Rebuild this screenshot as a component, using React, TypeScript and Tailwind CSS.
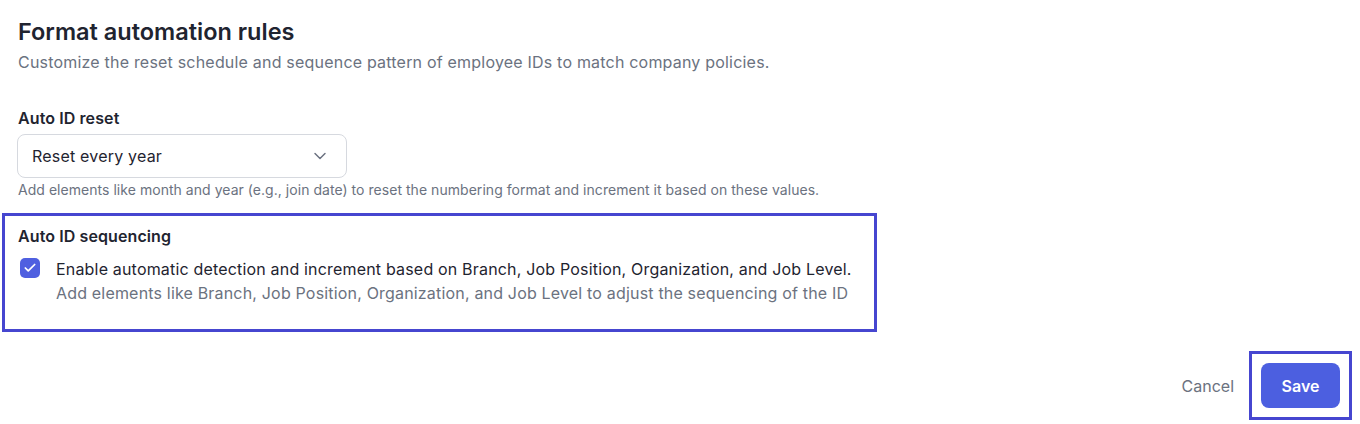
import React from "react";

export default function App() {
  return (
    <div className="w-[1360px] h-[424px] bg-white overflow-hidden font-['Inter',sans-serif] antialiased">
      <div className="pl-[18px] pt-4">
        <h1 className="text-[23.5px] leading-8 font-semibold text-[#1f2430]">Format automation rules</h1>
        <p className="mt-0.5 text-base leading-6 tracking-[0.2px] text-[#6b7280]">
          Customize the reset schedule and sequence pattern of employee IDs to match company policies.
        </p>

        <div className="mt-8 text-base leading-6 font-semibold tracking-[0.1px] text-[#1f2430]">Auto ID reset</div>
        <div className="mt-1 ml-[-1px] w-[330px] h-[44px] rounded-lg border border-[#d6d9df] flex items-center justify-between pl-[14px] pr-[16px]">
          <span className="text-base tracking-[0.2px] text-[#1f2430]">Reset every year</span>
          <svg width="20" height="20" viewBox="0 0 24 24" fill="none" stroke="#6b7280" strokeWidth="1.75" strokeLinecap="round" strokeLinejoin="round">
            <path d="m6 9 6 6 6-6" />
          </svg>
        </div>
        <p className="mt-0.5 text-sm leading-5 tracking-[0.04px] text-[#6b7280]">
          Add elements like month and year (e.g., join date) to reset the numbering format and increment it based on these values.
        </p>
      </div>

      <div className="mt-[13px] ml-[2px] w-[875px] border-[3px] border-[#4646d0] pl-[13px] pt-2 pb-6">
        <div className="text-base leading-6 font-semibold tracking-[0.1px] text-[#1f2430]">Auto ID sequencing</div>
        <div className="mt-[9px] flex items-start gap-4">
          <div className="ml-[2px] mt-[1px] w-5 h-5 rounded-[5px] bg-[#4f5fe0] flex items-center justify-center shrink-0">
            <svg width="14" height="14" viewBox="0 0 24 24" fill="none" stroke="white" strokeWidth="3" strokeLinecap="round" strokeLinejoin="round">
              <path d="M20 6 9 17l-5-5" />
            </svg>
          </div>
          <div>
            <div className="text-base leading-6 tracking-[0.18px] text-[#1f2430]">
              Enable automatic detection and increment based on Branch, Job Position, Organization, and Job Level.
            </div>
            <div className="text-base leading-6 tracking-[0.18px] text-[#6b7280]">
              Add elements like Branch, Job Position, Organization, and Job Level to adjust the sequencing of the ID
            </div>
          </div>
        </div>
      </div>

      <div className="mt-[19px] pr-2 flex items-center justify-end gap-[15px]">
        <button className="text-base text-[#6b7280] px-0">Cancel</button>
        <div className="border-[3px] border-[#4646d0] p-[9px]">
          <button className="w-[79px] h-[45px] rounded-lg bg-[#4c5fe0] text-white text-base font-semibold">Save</button>
        </div>
      </div>
    </div>
  );
}
